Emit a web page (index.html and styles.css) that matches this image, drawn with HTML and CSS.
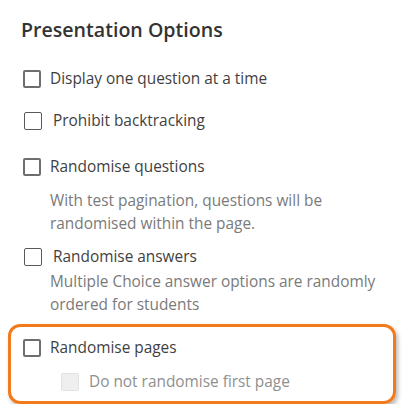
FILE: index.html
```html
<!DOCTYPE html>
<html lang="en">
<head>
<meta charset="utf-8">
<title>Presentation Options</title>
<link rel="stylesheet" href="styles.css">
</head>
<body>
<div class="panel">
  <h2 class="title">Presentation Options</h2>
  <div class="option opt1">
    <span class="box thick"></span>
    <span class="label">Display one question at a time</span>
  </div>
  <div class="option opt2 thin-row">
    <span class="box thin"></span>
    <span class="label">Prohibit backtracking</span>
  </div>
  <div class="option opt3">
    <span class="box thick"></span>
    <span class="label">Randomise questions</span>
  </div>
  <p class="desc desc1">With test pagination, questions will be randomised within the page.</p>
  <div class="option opt4 thin-row">
    <span class="box thin"></span>
    <span class="label">Randomise answers</span>
  </div>
  <p class="desc desc2">Multiple Choice answer options are randomly ordered for students</p>
  <div class="highlight">
    <div class="option opt5">
      <span class="box thick"></span>
      <span class="label">Randomise pages</span>
    </div>
    <div class="option sub">
      <span class="box disabled"></span>
      <span class="label muted">Do not randomise first page</span>
    </div>
  </div>
</div>
</body>
</html>
```
FILE: styles.css
```css
html, body {
  margin: 0;
  padding: 0;
  background: #ffffff;
}
body {
  font-family: "Open Sans", "Noto Sans", sans-serif;
  color: #444;
}
.panel {
  padding: 17px 10px 0 8px;
}
.title {
  margin: 0 0 24px 13px;
  font-size: 19.6px;
  line-height: 26px;
  font-weight: 600;
  color: #333;
}
.option {
  display: flex;
  align-items: center;
  gap: 9px;
  padding-left: 15px;
  font-size: 15.4px;
  line-height: 24px;
}
.thin-row {
  padding-left: 16px;
  gap: 11px;
}
.box {
  flex: none;
  width: 18px;
  height: 18px;
  box-sizing: border-box;
  border-radius: 2px;
  background: #fff;
}
.thick { border: 2px solid #6e6e6e; }
.thin { border: 1px solid #5a5a5a; }
.disabled {
  border: 1px solid #e2e2e2;
  background: #efefef;
}
.label { color: #3f3f3f; }
.muted { color: #8f8f8f; }
.opt2 { margin-top: 18px; }
.opt3 { margin-top: 22px; }
.desc {
  margin: 0;
  padding-left: 42px;
  font-size: 15.4px;
  line-height: 23px;
  color: #7a7a7a;
}
.desc1 { margin-top: 10px; padding-right: 20px; }
.opt4 { margin-top: 10px; }
.desc2 { margin-top: 1px; }
.highlight {
  margin-top: 8px;
  border: 3px solid #f27a1a;
  border-radius: 12px;
  padding: 9px 0 7px 0;
  box-shadow: 2px 3px 4px rgba(0, 0, 0, 0.28);
}
.highlight .option { padding-left: 12px; }
.highlight .sub {
  margin-top: 10px;
  padding-left: 50px;
  gap: 10px;
}
```
